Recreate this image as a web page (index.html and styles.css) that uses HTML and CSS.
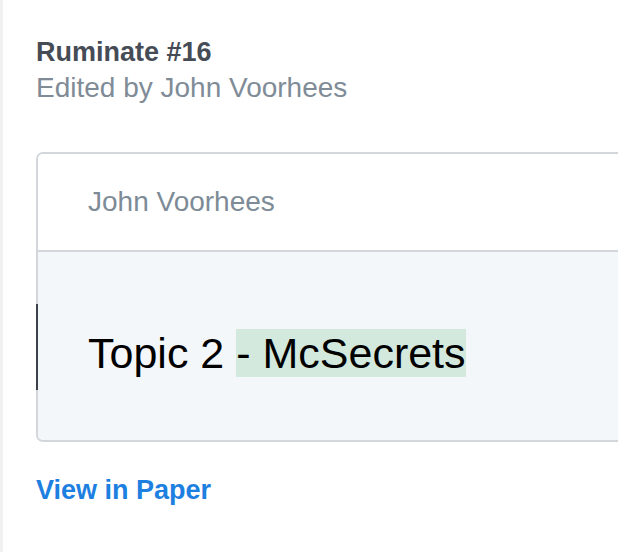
FILE: index.html
```html
<!DOCTYPE html>
<html>
<head>
<meta charset="utf-8">
<link rel="stylesheet" href="styles.css">
</head>
<body>
<div class="page">
  <div class="strip"></div>
  <main class="content">
    <div class="title">Ruminate #16</div>
    <div class="subtitle">Edited by John Voorhees</div>
    <div class="card">
      <div class="card-head">John Voorhees</div>
      <div class="card-body">
        <div class="bar"></div>
        <p class="doc"><span>Topic 2 </span><span class="added">- McSecrets</span></p>
      </div>
    </div>
    <a class="link" href="#">View in Paper</a>
  </main>
</div>
</body>
</html>
```
FILE: styles.css
```css
html, body {
  margin: 0;
  padding: 0;
  background: #ffffff;
  width: 618px;
  height: 552px;
  overflow: hidden;
}
.page {
  display: flex;
  height: 552px;
  font-family: "Liberation Sans", Arial, sans-serif;
}
.strip {
  width: 3px;
  background: #f1f1f1;
  flex: none;
}
.content {
  padding: 35px 0 0 33px;
  flex: 1;
  min-width: 0;
}
.title {
  font-size: 27px;
  font-weight: bold;
  color: #464c55;
  line-height: 35px;
}
.subtitle {
  font-size: 28px;
  color: #7f8c97;
  line-height: 35px;
}
.card {
  margin-top: 47px;
  margin-right: -20px;
  border: 2px solid #d3d7dc;
  border-radius: 7px;
}
.card-head {
  height: 98px;
  box-sizing: border-box;
  padding-left: 50px;
  display: flex;
  align-items: center;
  font-size: 28px;
  color: #7d8b97;
  background: #ffffff;
  border-radius: 5px 5px 0 0;
  border-bottom: 2px solid #d3d7dc;
}
.card-body {
  position: relative;
  height: 188px;
  box-sizing: border-box;
  padding-top: 77px;
  background: #f4f7fa;
  border-radius: 0 0 5px 5px;
}
.bar {
  position: absolute;
  left: -2px;
  top: 52px;
  width: 2px;
  height: 86px;
  background: #3b4148;
}
.doc {
  margin: 0 0 0 50px;
  font-size: 43px;
  line-height: 48px;
  color: #000000;
}
.added {
  background: #d3e9dd;
}
.link {
  display: inline-block;
  margin-top: 31px;
  font-size: 27px;
  line-height: 35px;
  font-weight: bold;
  color: #1d80e0;
  text-decoration: none;
}
```
